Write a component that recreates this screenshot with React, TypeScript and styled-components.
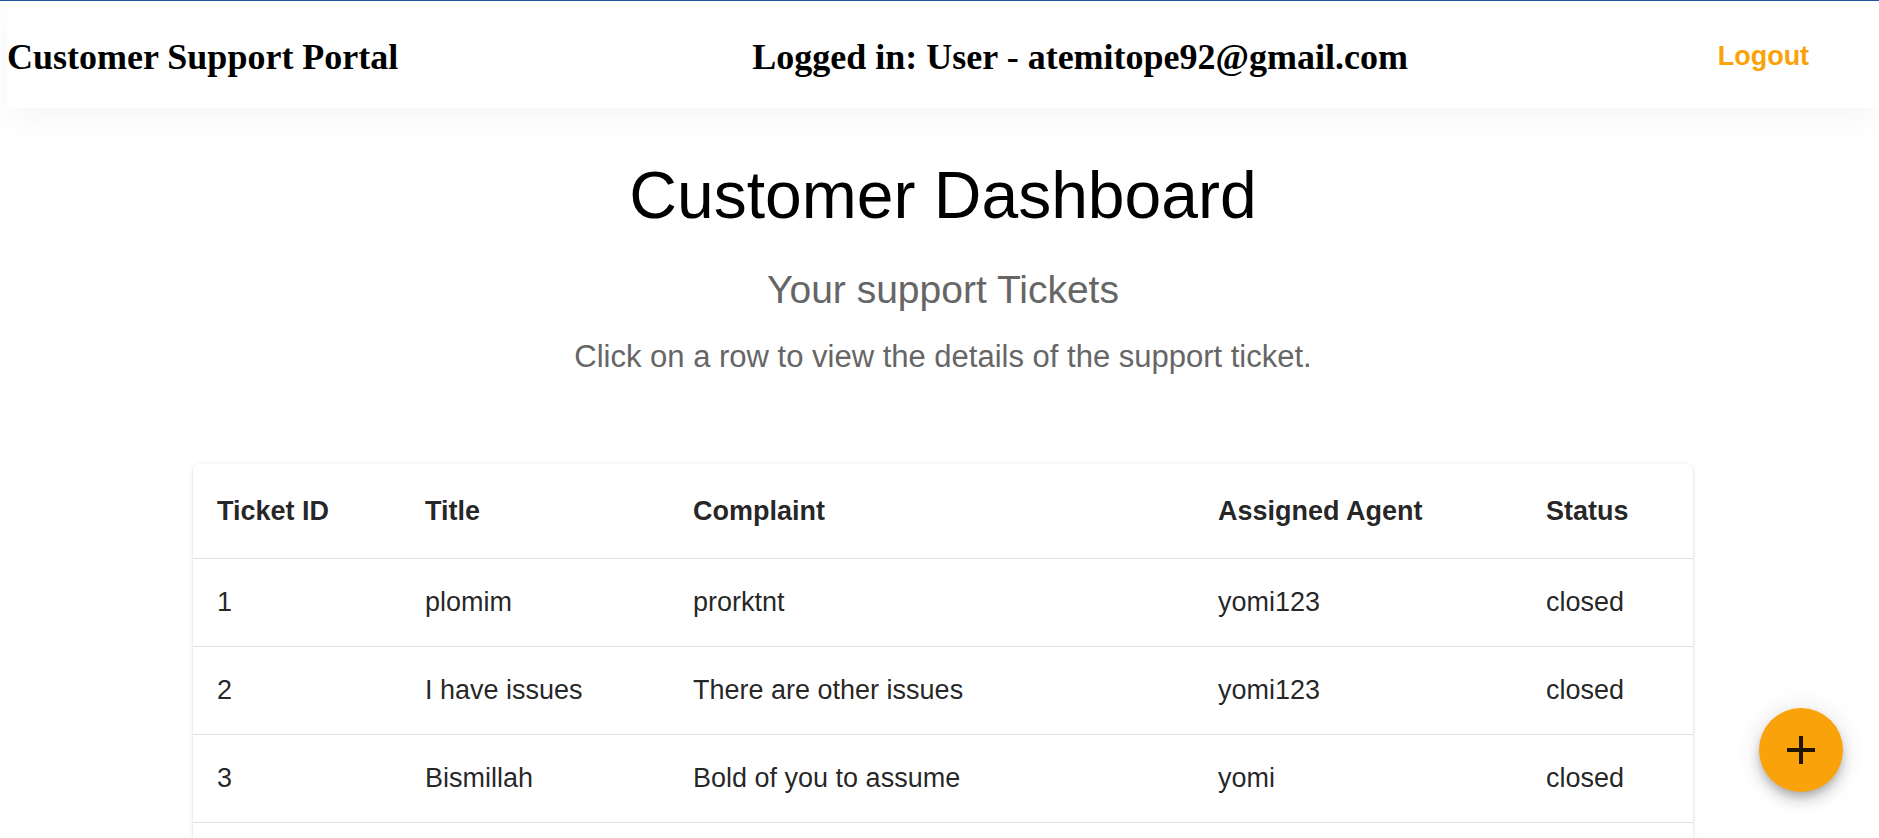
import React from 'react';
import styled, { createGlobalStyle } from 'styled-components';

const GlobalStyle = createGlobalStyle`
  *, *::before, *::after { box-sizing: border-box; }
  body {
    margin: 0;
    background: #fff;
    color: #000;
    font-family: Arial, "Liberation Sans", sans-serif;
  }
`;

const Page = styled.div`
  min-height: 100vh;
  display: flex;
  flex-direction: column;
  padding: 4px 0 0 7px;
  border-top: 1px solid #1a56a0;
  overflow: hidden;
`;

const Header = styled.header`
  display: grid;
  grid-template-columns: 43fr 55fr 10fr;
  align-items: start;
  justify-items: start;
  padding: 31px 0 30px;
  box-shadow: 0 10px 30px rgba(0, 0, 0, 0.04);
`;

const HeaderText = styled.p`
  margin: 0;
  font: bold 36px/42px "Times New Roman", "Liberation Serif", serif;
  white-space: nowrap;
`;

const LogoutButton = styled.button`
  padding: 0 12px;
  border: 0;
  background: none;
  color: #faa20a;
  font: bold 27px/40px Arial, "Liberation Sans", sans-serif;
  cursor: pointer;
`;

const Main = styled.main`
  flex: 1;
  display: flex;
  flex-direction: column;
  align-items: center;
  padding-top: 48px;
`;

const Title = styled.h1`
  margin: 0 0 26px;
  font-size: 66px;
  line-height: 78px;
  font-weight: 400;
`;

const Subtitle = styled.h2`
  margin: 0 0 14px;
  color: #666;
  font-size: 39px;
  line-height: 60px;
  font-weight: 400;
`;

const Hint = styled.p`
  margin: 0 0 84px;
  color: #666;
  font-size: 31px;
  line-height: 46px;
`;

const TableCard = styled.section`
  flex: 1;
  width: 100%;
  max-width: 1500px;
  border-radius: 6px 6px 0 0;
  background: #fff;
  box-shadow:
    0 3px 2px -2px rgba(0, 0, 0, 0.2),
    0 1px 2px 0 rgba(0, 0, 0, 0.12),
    0 1px 5px 0 rgba(0, 0, 0, 0.1);
`;

const Table = styled.table`
  width: 100%;
  table-layout: fixed;
  border-collapse: separate;
  border-spacing: 0;
  color: rgba(0, 0, 0, 0.87);
  font-size: 27px;
  line-height: 39px;
  text-align: left;
`;

const HeadCell = styled.th<{ $width: number }>`
  width: ${({ $width }) => $width}px;
  padding: 24px;
  border-bottom: 1px solid #e0e0e0;
  line-height: 46px;
  white-space: nowrap;
`;

const Cell = styled.td`
  padding: 24px;
  border-bottom: 1px solid #e0e0e0;
`;

const Row = styled.tr`
  cursor: pointer;
`;

const AddButton = styled.button`
  position: fixed;
  right: 36px;
  bottom: 46px;
  display: flex;
  align-items: center;
  justify-content: center;
  width: 84px;
  height: 84px;
  padding: 0;
  border: 0;
  border-radius: 50%;
  background: #faa20a;
  color: rgba(0, 0, 0, 0.87);
  cursor: pointer;
  box-shadow:
    0 5px 8px -2px rgba(0, 0, 0, 0.2),
    0 9px 15px 0 rgba(0, 0, 0, 0.14),
    0 2px 27px 0 rgba(0, 0, 0, 0.12);
`;

const columns = [
  { label: 'Ticket ID', width: 208 },
  { label: 'Title', width: 268 },
  { label: 'Complaint', width: 525 },
  { label: 'Assigned Agent', width: 328 },
  { label: 'Status', width: 171 },
];

const tickets = [
  { id: 1, title: 'plomim', complaint: 'prorktnt', agent: 'yomi123', status: 'closed' },
  { id: 2, title: 'I have issues', complaint: 'There are other issues', agent: 'yomi123', status: 'closed' },
  { id: 3, title: 'Bismillah', complaint: 'Bold of you to assume', agent: 'yomi', status: 'closed' },
];

export default function App() {
  return (
    <>
      <GlobalStyle />
      <Page>
        <Header>
          <HeaderText>Customer Support Portal</HeaderText>
          <HeaderText>Logged in: User - atemitope92@gmail.com</HeaderText>
          <LogoutButton type="button">Logout</LogoutButton>
        </Header>
        <Main>
          <Title>Customer Dashboard</Title>
          <Subtitle>Your support Tickets</Subtitle>
          <Hint>Click on a row to view the details of the support ticket.</Hint>
          <TableCard>
            <Table>
              <thead>
                <tr>
                  {columns.map((column) => (
                    <HeadCell key={column.label} scope="col" $width={column.width}>
                      {column.label}
                    </HeadCell>
                  ))}
                </tr>
              </thead>
              <tbody>
                {tickets.map((ticket) => (
                  <Row key={ticket.id}>
                    <Cell>{ticket.id}</Cell>
                    <Cell>{ticket.title}</Cell>
                    <Cell>{ticket.complaint}</Cell>
                    <Cell>{ticket.agent}</Cell>
                    <Cell>{ticket.status}</Cell>
                  </Row>
                ))}
              </tbody>
            </Table>
          </TableCard>
        </Main>
        <AddButton type="button" aria-label="Add ticket">
          <svg width="48" height="48" viewBox="0 0 24 24" fill="currentColor" aria-hidden="true">
            <path d="M19 13h-6v6h-2v-6H5v-2h6V5h2v6h6v2z" />
          </svg>
        </AddButton>
      </Page>
    </>
  );
}
